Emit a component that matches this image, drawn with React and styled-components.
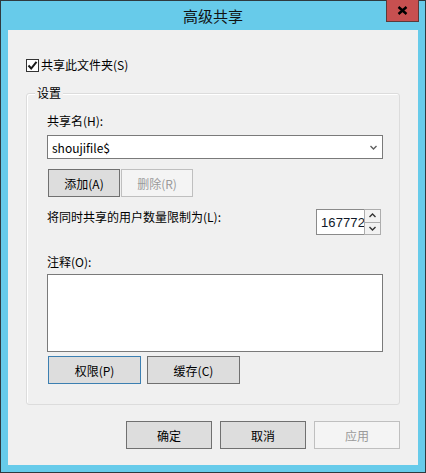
import React from "react";
import styled, { createGlobalStyle } from "styled-components";

const Global = createGlobalStyle`
  html, body { margin: 0; padding: 0; background: #ffffff; }
  body { font-family: "Noto Sans CJK SC", "Noto Sans", sans-serif; font-size: 12px; color: #000; }
  * { box-sizing: border-box; }
`;

const Window = styled.div`
  position: relative;
  width: 426px;
  height: 473px;
  border: 1px solid #2f3a3f;
  background: #67cbea;
  display: flex;
  flex-direction: column;
`;

const TitleBar = styled.div`
  height: 29px;
  display: flex;
  align-items: center;
  justify-content: center;
  font-size: 15px;
  color: #111;
  padding-bottom: 1px;
`;

const CloseButton = styled.div`
  position: absolute;
  top: -1px;
  right: 6px;
  width: 33px;
  height: 22px;
  background: #c75050;
  border: 1px solid #5a3a3a;
  border-top: none;
  display: flex;
  align-items: center;
  justify-content: center;
`;

const Client = styled.div`
  flex: 1;
  margin: 0 7px 7px;
  background: #f0f0f0;
  display: flex;
  flex-direction: column;
  padding-top: 27px;
`;

const CheckRow = styled.label`
  display: flex;
  align-items: center;
  gap: 2px;
  margin-left: 18px;
  height: 16px;
  line-height: 16px;
`;

const CheckBox = styled.span`
  width: 13px;
  height: 13px;
  border: 1px solid #333;
  background: #fff;
  display: flex;
  align-items: center;
  justify-content: center;
`;

const GroupBox = styled.div`
  position: relative;
  margin: 20px 0 0 18px;
  width: 374px;
  height: 312px;
  border: 1px solid #dcdcdc;
  border-radius: 3px;
  box-shadow: inset 1px 1px 0 #fff;
  padding: 19px 0 0 20px;
  display: flex;
  flex-direction: column;
`;

const Legend = styled.span`
  position: absolute;
  top: -9px;
  left: 8px;
  padding: 0 2px;
  background: #f0f0f0;
  line-height: 16px;
`;

const FieldLabel = styled.div`
  line-height: 16px;
  height: 16px;
  margin-top: ${(p) => p.$mt || 0}px;
`;

const Combo = styled.div`
  margin-top: 6px;
  width: 336px;
  height: 24px;
  border: 1px solid #7a7a7a;
  background: #fff;
  display: flex;
  align-items: center;
  justify-content: space-between;
  padding: 0 5px 0 4px;
  font-size: 12px;
`;

const ButtonRow = styled.div`
  display: flex;
  gap: ${(p) => p.$gap}px;
  margin-top: ${(p) => p.$mt}px;
  margin-left: ${(p) => p.$ml || 0}px;
`;

const Button = styled.div`
  width: ${(p) => p.$w}px;
  height: 28px;
  display: flex;
  align-items: center;
  justify-content: center;
  font-size: 12px;
  background: ${(p) => (p.$disabled ? "#f4f4f4" : "#dddddd")};
  border: 1px solid
    ${(p) => (p.$disabled ? "#bfbfbf" : p.$focus ? "#3c7fb1" : "#707070")};
  color: ${(p) => (p.$disabled ? "#9a9a9a" : "#000")};
`;

const LimitRow = styled.div`
  margin-top: 12px;
  width: 334px;
  display: flex;
  justify-content: space-between;
  align-items: flex-start;
`;

const Spin = styled.div`
  display: flex;
  height: 26px;
`;

const SpinField = styled.div`
  width: 48px;
  height: 26px;
  border: 1px solid #8a8a8a;
  border-right: none;
  background: #fff;
  display: flex;
  align-items: center;
  padding-left: 4px;
  font-size: 13px;
  letter-spacing: 0.1px;
  color: #101828;
  font-family: "Liberation Sans", "Noto Sans", sans-serif;
`;

const SpinButtons = styled.div`
  width: 17px;
  display: flex;
  flex-direction: column;
  border: 1px solid #adadad;
  background: #f0f0f0;
`;

const SpinBtn = styled.div`
  flex: 1;
  display: flex;
  align-items: center;
  justify-content: center;
  background: #f2f2f2;
  border-top: ${(p) => (p.$bottom ? "1px solid #adadad" : "none")};
`;

const TextArea = styled.div`
  margin-top: 4px;
  width: 336px;
  height: 78px;
  border: 1px solid #7a7a7a;
  background: #fff;
`;

const Footer = styled.div`
  display: flex;
  justify-content: flex-end;
  gap: 8px;
  margin-top: 16px;
  padding-right: 18px;
`;

const Chevron = ({ up, color = "#505050" }) => (
  <svg width="7" height="5" viewBox="0 0 7 5">
    <path
      d={up ? "M0.5 4 L3.5 1 L6.5 4" : "M0.5 1 L3.5 4 L6.5 1"}
      fill="none"
      stroke={color}
      strokeWidth="1.4"
    />
  </svg>
);

export default function App() {
  return (
    <>
      <Global />
      <Window>
        <TitleBar>高级共享</TitleBar>
        <CloseButton>
          <svg width="11" height="9" viewBox="0 0 11 9">
            <path d="M1.5 1 L9.5 8 M9.5 1 L1.5 8" stroke="#000" strokeWidth="2.4" />
          </svg>
        </CloseButton>
        <Client>
          <CheckRow>
            <CheckBox>
              <svg width="11" height="11" viewBox="0 0 11 11">
                <path d="M1.5 5.5 L4.2 8.5 L9.5 1.8" fill="none" stroke="#1a1a1a" strokeWidth="2" />
              </svg>
            </CheckBox>
            共享此文件夹(S)
          </CheckRow>
          <GroupBox>
            <Legend>设置</Legend>
            <FieldLabel>共享名(H):</FieldLabel>
            <Combo>
              <span>shoujifile$</span>
              <Chevron color="#606060" />
            </Combo>
            <ButtonRow $gap={1} $mt={10} $ml={1}>
              <Button $w={72}>添加(A)</Button>
              <Button $w={72} $disabled>删除(R)</Button>
            </ButtonRow>
            <LimitRow>
              <FieldLabel>将同时共享的用户数量限制为(L):</FieldLabel>
              <Spin>
                <SpinField>167772</SpinField>
                <SpinButtons>
                  <SpinBtn>
                    <Chevron up color="#333" />
                  </SpinBtn>
                  <SpinBtn $bottom>
                    <Chevron color="#333" />
                  </SpinBtn>
                </SpinButtons>
              </Spin>
            </LimitRow>
            <FieldLabel $mt={19}>注释(O):</FieldLabel>
            <TextArea />
            <ButtonRow $gap={6} $mt={4} $ml={1}>
              <Button $w={93} $focus>权限(P)</Button>
              <Button $w={93}>缓存(C)</Button>
            </ButtonRow>
          </GroupBox>
          <Footer>
            <Button $w={86}>确定</Button>
            <Button $w={86}>取消</Button>
            <Button $w={86} $disabled>应用</Button>
          </Footer>
        </Client>
      </Window>
    </>
  );
}
